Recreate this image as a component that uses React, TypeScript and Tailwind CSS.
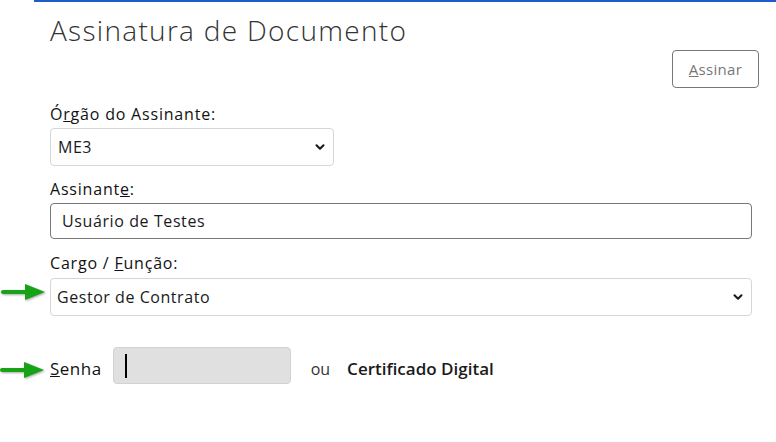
import { ChevronDown } from "lucide-react";

function GreenArrow() {
  return (
    <svg width="46" height="18" viewBox="0 0 46 18" className="drop-shadow-[1px_1px_1px_rgba(0,0,0,0.35)]">
      <rect x="0" y="7" width="28" height="4" rx="2" fill="#16a316" />
      <path d="M24 1 L44 9 L24 17 Z" fill="#16a316" />
    </svg>
  );
}

export default function App() {
  return (
    <div className="relative w-[776px] h-[442px] bg-white overflow-hidden text-[#1a1a1a] font-['Open_Sans','Lato',sans-serif]">
      <div className="ml-[34px] h-[2px] bg-[#1b5dc8]" />

      <div className="pl-[50px] pr-[24px]">
        <h1 className="mt-[11px] text-[28px] leading-[34px] font-light text-[#333] tracking-[1.3px]">Assinatura de Documento</h1>

        <div className="flex justify-end mt-[3px] mr-[-7px]">
          <button className="w-[87px] h-[38px] border border-[#777] rounded-[4px] text-[15px] text-[#777] tracking-[0.3px]">
            <span className="underline">A</span>ssinar
          </button>
        </div>

        <label className="block mt-[16px] text-[16px] leading-[20px] tracking-[0.8px] text-[#111]">
          Ó<span className="underline">r</span>gão do Assinante:
        </label>
        <div className="mt-[4px] w-[284px] h-[38px] border border-[#d6d6d6] rounded-[4px] flex items-center justify-between pl-[7px] pr-[6px]">
          <span className="text-[16px] tracking-[0.5px]">ME3</span>
          <ChevronDown size={14} strokeWidth={3.5} />
        </div>

        <label className="block mt-[13px] text-[16px] leading-[20px] tracking-[0.8px] text-[#111]">
          Assinant<span className="underline">e</span>:
        </label>
        <div className="mt-[4px] h-[36px] border border-[#777] rounded-[4px] flex items-center pl-[11px]">
          <span className="text-[16px] tracking-[0.6px]">Usuário de Testes</span>
        </div>

        <label className="block mt-[14px] text-[16px] leading-[20px] tracking-[0.8px] text-[#111]">
          Cargo / <span className="underline">F</span>unção:
        </label>
        <div className="relative mt-[5px] h-[38px] border border-[#d6d6d6] rounded-[4px] flex items-center justify-between pl-[6px] pr-[6px]">
          <div className="absolute left-[-50px] top-[4px]">
            <GreenArrow />
          </div>
          <span className="text-[16px] tracking-[0.55px]">Gestor de Contrato</span>
          <ChevronDown size={14} strokeWidth={3.5} />
        </div>

        <div className="relative mt-[31px] flex items-center">
          <div className="absolute left-[-50px] top-[14px]">
            <GreenArrow />
          </div>
          <span className="pt-[6px] text-[17px] tracking-[0.5px] text-[#111]">
            <span className="underline">S</span>enha
          </span>
          <div className="ml-[11px] w-[178px] h-[37px] bg-[#e0e0e0] border border-[#d2d2d2] rounded-[4px] flex items-center pl-[11px]">
            <div className="w-[2px] h-[24px] bg-black" />
          </div>
          <span className="pt-[6px] ml-[20px] text-[16px] text-[#333]">ou</span>
          <span className="pt-[6px] ml-[17px] text-[17px] font-semibold">Certificado Digital</span>
        </div>
      </div>
    </div>
  );
}
